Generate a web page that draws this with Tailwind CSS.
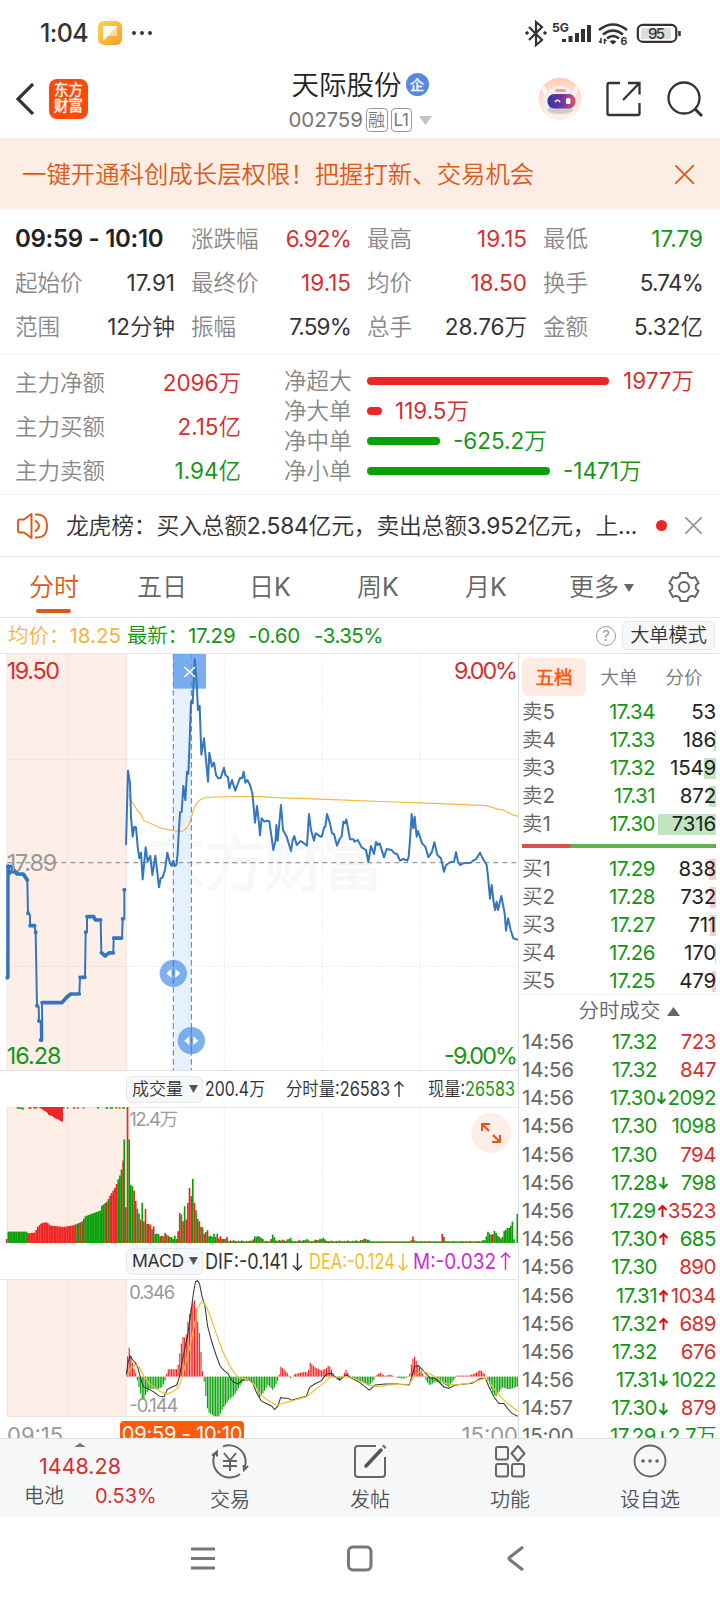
<!DOCTYPE html>
<html lang="zh-CN">
<head>
    <meta charset="UTF-8">
    <title>天际股份 002759</title>
    <meta name="viewport" content="width=device-width, initial-scale=1.0">
    <script src="https://cdn.jsdelivr.net/npm/@tailwindcss/browser@4"></script>
</head>
<body class="w-[720px] h-[1600px] overflow-hidden bg-white text-[#333] leading-none whitespace-nowrap font-['Inter','Noto_Sans_CJK_SC_DemiLight','Noto_Sans_CJK_SC',sans-serif]">
    <!-- Status bar -->
    <div class="h-[66px] pl-[40px] pr-[39px] flex items-center justify-between">
        <div class="flex items-center">
            <span class="w-[58px] text-[25px] font-medium tracking-tight">1:04</span>
            <svg class="w-6 h-6" viewBox="0 0 24 24">
                <defs><linearGradient id="note" x1="0" y1="0" x2="1" y2="1"><stop offset="0" stop-color="#f8d84c"/><stop offset="1" stop-color="#fb9a2c"/></linearGradient></defs>
                <rect width="24" height="24" rx="6" fill="url(#note)"/>
                <path d="M5 5h14v10l-9 0-5 5z" fill="#fff" opacity=".5"/><path d="M5 5h14L5 20z" fill="#fff"/>
            </svg>
            <svg class="w-[22px] h-2 ml-[9px]" viewBox="0 0 22 8" fill="#333"><circle cx="3" cy="4" r="2"/><circle cx="11" cy="4" r="2"/><circle cx="19" cy="4" r="2"/></svg>
        </div>
        <svg class="w-[157px] h-[28px]" viewBox="523 19 157 28" fill="none" stroke="#333" stroke-width="2.2">
            <path d="M528 27l13 13-6 5V22l6 5-13 13" stroke-width="2.200"/><circle cx="526" cy="33" r="1.3" fill="#333" stroke-width="1"/><circle cx="544" cy="33" r="1.3" fill="#333" stroke-width="1"/>
            <text x="551" y="32" font-size="12" font-weight="700" fill="#333" stroke="none" textLength="17" lengthAdjust="spacingAndGlyphs">5G</text>
            <path d="M563 42v-3M569.500 42v-6M576 42v-9M582 42v-13M588 42V25" stroke-width="4"/>
            <path d="M598 30q14-11 28 0M602 34.500q10-8 20 0M606 38.500q6-5 12 0" stroke-width="2.600"/><path d="M608.500 41.500l3.500 3 3.500-3q-3.500-2.500-7 0z" fill="#333" stroke="none"/>
            <path d="M600 38v5M603.500 39v5M598 41l2 2M603.500 39l2 2" stroke-width="1.500"/>
            <text x="619.500" y="45" font-size="10.500" font-weight="700" fill="#333" stroke="none">6</text>
            <rect x="636.800" y="24.800" width="38.500" height="17" rx="5"/><rect x="640" y="28" width="30" height="11" rx="1" fill="#ddd" stroke="none"/>
            <path d="M678.500 31v5" stroke-width="2.500"/>
            <text x="647" y="39" font-size="15" font-weight="500" fill="#333" stroke="none" textLength="17">95</text>
        </svg>
    </div>

    <!-- Title bar -->
    <header class="h-[73px] grid grid-cols-[1fr_auto_1fr] border-b border-[#e8e8e8]">
        <div class="flex items-center pl-4 pb-[7px]">
            <svg class="w-[18px] h-8" viewBox="0 0 18 32" fill="none" stroke="#333" stroke-width="3.200"><path d="M17 1L2 16l15 15"/></svg>
            <div class="ml-[15px] w-[39px] h-[40px] rounded-[8px] bg-[#fe4a05] text-white text-[14.500px] leading-[16.500px] font-black text-center pt-[3px]">东方<br>财富</div>
        </div>
        <div class="flex flex-col items-center">
            <div class="flex items-center mt-[4px] h-[32px]">
                <span class="text-[27.500px] text-[#222]">天际股份</span>
                <span class="ml-1 -mt-[3px] w-[23px] h-[23px] rounded-full bg-[#5b87e4] text-white text-[14px] font-bold flex items-center justify-center">企</span>
            </div>
            <div class="flex items-center h-[32px] mt-[2px] text-[#777]">
                <span class="text-[20.500px] w-[76px] tracking-[-0.1px]">002759</span>
                <span class="ml-px w-[22px] h-[24px] border border-[#999] rounded text-[17px] flex items-center justify-center">融</span>
                <span class="ml-[3px] w-[21px] h-[24px] border border-[#999] rounded text-[17px] tracking-tight flex items-center justify-center">L1</span>
                <svg class="ml-[7px] w-[13px] h-[9px]" viewBox="0 0 13 9"><path d="M0 0h13L6.500 9z" fill="#c4c4c4"/></svg>
            </div>
        </div>
        <div class="flex items-center justify-end pr-[17px] pb-[7px]">
            <svg class="w-[44px] h-[44px]" viewBox="0 0 44 44">
                <defs>
                    <linearGradient id="halo" x1="0" y1="0" x2="0" y2="1"><stop offset="0" stop-color="#ffcdb8"/><stop offset="1" stop-color="#fff4ef"/></linearGradient>
                    <linearGradient id="visor"><stop offset="0" stop-color="#3935a6"/><stop offset=".5" stop-color="#6b35a2"/><stop offset="1" stop-color="#e0526a"/></linearGradient>
                </defs>
                <circle cx="22" cy="22" r="21.500" fill="url(#halo)"/>
                <path d="M5 10l4 9M39 10l-4 9" stroke="#fff" stroke-width="4"/>
                <path d="M5 28c-1-8 5-19 17-19s18 10 17 19q-3 9-17 9T5 28z" fill="#f2eeee"/>
                <ellipse cx="22" cy="33" rx="13" ry="4" fill="#cfccd0"/>
                <rect x="17" y="12" width="11" height="3" rx="1.500" fill="#dfae78"/>
                <rect x="9.500" y="17" width="28" height="14.500" rx="6.500" fill="url(#visor)"/>
                <path d="M17 25q2.500-3.500 5 0" stroke="#fff" stroke-width="1.600" fill="none"/><rect x="28" y="21" width="4.500" height="6" rx="1.500" fill="#fff"/>
            </svg>
            <svg class="ml-[24px] w-[36px] h-[36px]" viewBox="0 0 36 36" fill="none" stroke="#333" stroke-width="2.300"><path d="M14 2H3q-1.500 0-1.500 1.500v29Q1.500 34 3 34h29q1.500 0 1.500-1.500V22M22 2h11.500v11.500M33 2.500L17 19"/></svg>
            <svg class="ml-[25px] w-[36px] h-[36px]" viewBox="0 0 36 36" fill="none" stroke="#333" stroke-width="2.300"><circle cx="17" cy="17" r="15.500"/><path d="M28 28l7 7" stroke-width="3"/></svg>
        </div>
    </header>

    <!-- Promo banner -->
    <div class="h-[70px] bg-[#fdede4] pl-[22px] pr-[26px] flex items-center justify-between text-[#dc5a16]">
        <span class="text-[24.400px]">一键开通科创成长层权限！把握打新、交易机会</span>
        <svg class="w-[19px] h-[19px]" viewBox="0 0 19 19" stroke="currentColor" stroke-width="1.700"><path d="M0 0l19 19M19 0L0 19"/></svg>
    </div>

    <!-- Range statistics, filled in below -->
    <div id="stats" class="h-[146px] pl-[15px] pr-[17px] pt-[8px] grid grid-cols-4 gap-x-4 auto-rows-[44px] items-center border-b border-[#f3f3f3]"></div>

    <!-- Money flow -->
    <div class="h-[140px] flex border-b border-[#f3f3f3] text-[22.500px] text-[#888]">
        <div class="w-[241px] pl-[15px] pt-[6px]">
            <div class="h-11 flex items-center justify-between"><span>主力净额</span><span class="text-[#d62f2f]">2096万</span></div>
            <div class="h-11 flex items-center justify-between"><span>主力买额</span><span class="text-[#d62f2f]">2.15亿</span></div>
            <div class="h-11 flex items-center justify-between"><span>主力卖额</span><span class="text-[#159515]">1.94亿</span></div>
        </div>
        <div class="pl-[43px] pt-[11px]">
            <div class="h-[30px] flex items-center"><span class="w-[83px]">净超大</span><i class="w-[242px] h-2 rounded-full bg-[#ef2424]"></i><span class="ml-[14px] text-[#d62f2f]">1977万</span></div>
            <div class="h-[30px] flex items-center"><span class="w-[83px]">净大单</span><i class="w-[15px] h-2 rounded-full bg-[#ef2424]"></i><span class="ml-[13px] text-[#d62f2f]">119.5万</span></div>
            <div class="h-[30px] flex items-center"><span class="w-[83px]">净中单</span><i class="w-[73px] h-2 rounded-full bg-[#08a008]"></i><span class="ml-[13px] text-[#159515]">-625.2万</span></div>
            <div class="h-[30px] flex items-center"><span class="w-[83px]">净小单</span><i class="w-[183px] h-2 rounded-full bg-[#08a008]"></i><span class="ml-[13px] text-[#159515]">-1471万</span></div>
        </div>
    </div>

    <!-- News ticker -->
    <div class="h-[62px] pl-[17px] pr-[17px] flex items-center border-b border-[#e5e5e5]">
        <svg class="w-[31px] h-[26px]" viewBox="0 0 31 26" fill="none" stroke="#dc5a16" stroke-width="1.900"><path d="M14.500 1L7 6.500H3q-2 0-2 2v9q0 2 2 2h4l7.500 5.500zM18 7.500q8 5.500 0 11M18 1.500q12-1 12 11.500T18 24.500"/></svg>
        <span class="ml-[18px] w-[574px] pt-[2px] text-[22.800px] tracking-[-0.2px]">龙虎榜：买入总额2.584亿元，卖出总额3.952亿元，上...</span>
        <i class="ml-4 w-[11px] h-[11px] rounded-full bg-[#ef2424]"></i>
        <svg class="ml-[18px] w-[17px] h-[17px]" viewBox="0 0 17 17" stroke="#999" stroke-width="1.900"><path d="M0 0l17 17M17 0L0 17"/></svg>
    </div>

    <!-- Period tabs -->
    <nav class="h-[61px] flex items-center border-b border-[#e5e5e5] text-[25px] text-[#666]">
        <div class="relative w-[108px] h-full flex items-center justify-center pt-px text-[#dc5a16]">分时<i class="absolute bottom-[4px] left-[36px] w-[35px] h-[4px] rounded-full bg-[#dc5a16]"></i></div>
        <div class="w-[108px] pt-px text-center">五日</div>
        <div class="w-[108px] pt-px text-center">日K</div>
        <div class="w-[108px] pt-px text-center">周K</div>
        <div class="w-[108px] pt-px text-center">月K</div>
        <div class="ml-[29px] pt-px flex items-center gap-[5px]">更多<svg class="w-[10px] h-[8px]" viewBox="0 0 10 8"><path d="M0 0h10L5 8z" fill="#666"/></svg></div>
        <svg class="ml-[34px] w-[32px] h-[32px]" viewBox="-16 -16 32 32" fill="none" stroke="#666" stroke-width="2"><path d="M-3.500-14h7l1 3.500 3 1.700 3.700-1 3.300 5.800-2.700 2.500v3l2.700 2.500-3.300 5.800-3.700-1-3 1.700-1 3.500h-7l-1-3.500-3-1.700-3.700 1-3.300-5.800 2.700-2.500v-3l-2.700-2.500 3.300-5.800 3.700 1 3-1.700z"/><circle r="5"/></svg>
    </nav>

    <!-- Latest quote line -->
    <div class="h-[36px] pl-[8px] pr-[5px] flex items-center border-b border-[#e5e5e5] text-[20.500px]">
        <span class="w-[119px] pt-px text-[#f2b544]">均价：18.25</span>
        <span class="w-[121px] pt-px text-[#159515] tracking-[-0.2px]">最新：17.29</span>
        <span class="w-[66px] pt-px text-[#159515] tracking-[-0.2px]">-0.60</span>
        <span class="pt-px text-[#159515] tracking-tight">-3.35%</span>
        <span class="ml-auto w-5 h-5 rounded-full border-[1.500px] border-[#999] text-[15px] text-[#999] flex items-center justify-center">?</span>
        <span class="ml-[6px] w-[93px] h-[29px] rounded-md border border-[#e6e8eb] bg-[#f6f7f9] text-[19.200px] flex items-center justify-center">大单模式</span>
    </div>

    <main class="h-[784px] flex overflow-hidden">
        <!-- Charts -->
        <section class="w-[519px] shrink-0 border-r border-[#e0e0e0]">
            <svg id="priceChart" class="block w-[518px] h-[416px]" viewBox="0 12 1554 1248" fill="none">
                <rect x="22" y="12" width="358" height="1248" fill="#fdeee8"/>
                <g stroke="#000" stroke-opacity=".07" stroke-width="3">
                    <path d="M203 12V1260M380 12V1260M673 12V1260M967 12V1260M1261 12V1260M22 328H1554M22 949H1554" stroke-dasharray="10 4"/>
                    <path d="M21 12V1260"/>
                </g>
                <text x="436" y="709" font-size="183" font-weight="900" fill="#f8f8f8" textLength="716">东方财富</text>
                <rect x="520" y="12" width="54" height="1248" fill="#e7f1fc"/>
                <path d="M22 638H1554" stroke="#999" stroke-width="3.500" stroke-dasharray="15 12"/>
                <path d="M520 12V1260M574 12V1260" stroke="#3f7fcc" stroke-width="3" stroke-dasharray="17 10"/>
                <rect x="519" y="12" width="99" height="104" fill="#5e9cea" fill-opacity=".82"/>
                <g fill="#5e9cea" fill-opacity=".8"><circle cx="520" cy="970" r="41"/><circle cx="574" cy="1172" r="41"/></g>
                <g stroke="#f4b73f" stroke-width="3.500">
                    <polyline points="386,437 392,447 398,460 404,468 412,482 420,488 432,512 460,524 480,534 520,542 545,545 560,535 568,522 576,495 584,470 596,452 612,444 640,441 720,440 780,440 830,443 980,448 1180,456 1300,460 1460,467 1495,478 1510,480 1537,494 1554,499"/>
                </g>
                <g stroke="#3475bd" stroke-width="6" stroke-linejoin="round">
                    <path d="M24 645V983" stroke-width="10"/>
                    <polyline points="22,983 24,645 30,672 38,655 45,660 50,672 68,674 76,684 82,695 84,790 90,795 90,827 103,828 107,847 111,1067 116,1070 117,1113 122,1114 123,1172 127,1172 126,1058 188,1058 192,1050 198,1040 212,1032 238,1031 240,982 255,982 257,847 261,845 261,800 280,800 285,810 302,808 304,908 315,918 328,906 340,908 341,862 345,866 366,866 368,807 373,807 373,718"/>
                    <path d="M24 650h14v16h12M50 672h20l12 18M90 827h14M126 1058h60l12-14 14-12h26M261 800h20l5 10h16M304 908l12 10 10-9h14M341 864h24M240 982h15" stroke-width="11" stroke-linecap="round"/>
                    <path d="M22 983h.1M84 790h.1M107 847h.1M111 1067h.1M117 1113h.1M122 1170h.1M257 847h.1M368 807h.1M373 719h.1" stroke-width="12" stroke-linecap="round"/>
                    <polyline points="378,585 384,362 390,400 393,500 398,560 403,530 408,532 413,590 418,625 423,608 428,688 437,592 443,635 451,618 457,675 466,617 477,712 482,685 488,682 495,660 502,608 510,640 515,648 520,632 524,648 529,645 533,610 536,550 540,487 545,486 550,408 556,450 561,365 565,372 568,300 573,155 578,160 584,28 590,100 594,180 599,168 604,314 612,265 618,330 624,395 628,308 636,350 642,338 648,375 655,385 662,384 672,353 676,375 684,382 688,415 696,390 702,410 706,422 712,405 720,384 726,385 731,365 736,398 742,390 750,405 757,430 761,470 765,518 771,468 776,510 780,556 785,505 793,515 800,512 808,514 820,600 827,570 829,525 833,572 843,465 849,540 860,560 873,603 878,570 883,558 890,585 902,573 912,580 921,587 927,492 933,540 942,572 947,550 962,560 966,558 972,533 976,530 981,492 990,520 996,550 1002,552 1011,587 1020,565 1025,560 1030,515 1035,520 1039,508 1050,568 1060,568 1064,575 1073,570 1085,592 1098,600 1105,635 1113,588 1122,612 1128,576 1133,585 1139,580 1152,622 1160,597 1175,600 1183,610 1191,612 1200,632 1210,627 1222,632 1226,620 1230,570 1235,492 1240,535 1244,500 1250,560 1254,543 1266,580 1276,590 1285,622 1296,605 1303,577 1312,615 1323,625 1332,665 1338,645 1352,636 1362,635 1368,607 1374,635 1380,645 1390,640 1412,638 1422,630 1428,628 1440,608 1448,625 1460,645 1464,680 1470,746 1475,705 1480,750 1485,780 1490,755 1494,780 1504,738 1514,790 1518,842 1524,805 1532,840 1540,865 1554,869"/>
                </g>
                <path d="M553 51l32 30M585 51l-32 30" stroke="#fff" stroke-width="5"/>
                <path d="M514 957v26l-15-13zM526 957v26l15-13zM568 1159v26l-15-13zM580 1159v26l15-13z" fill="#fff"/>
                <path d="M520 932v78M574 1134v78" stroke="#3f7fcc" stroke-width="3" stroke-dasharray="17 10"/>
                <g font-size="70">
                    <text x="20" y="88" fill="#d62f2f" textLength="160">19.50</text>
                    <text x="1554" y="88" fill="#d62f2f" text-anchor="end" textLength="192">9.00%</text>
                    <text x="20" y="662" fill="#999" textLength="152">17.89</text>
                    <text x="20" y="1241" fill="#159515" textLength="164">16.28</text>
                    <text x="1554" y="1241" fill="#159515" text-anchor="end" textLength="222">-9.00%</text>
                </g>
            </svg>

            <div class="h-[37px] border-t border-[#e0e0e0] pl-[126px] flex items-center text-[19px]">
                <span class="w-[77px] h-[27px] rounded-md border border-[#e6e8eb] bg-[#f6f7f9] pl-[5px] flex items-center text-[17px]">成交量<svg class="ml-[6px] w-[9px] h-[8px]" viewBox="0 0 9 8"><path d="M0 0h9L4.500 8z" fill="#555"/></svg></span>
                <svg class="w-[315px] h-[30px]" viewBox="203 0 315 30" font-size="19.500" fill="#333">
                    <text x="205" y="21.500" textLength="60" lengthAdjust="spacingAndGlyphs">200.4万</text>
                    <text x="286" y="21.500" textLength="104" lengthAdjust="spacingAndGlyphs">分时量:26583</text>
                    <path d="M399 23V8M394.500 12.500L399 8l4.500 4.500" fill="none" stroke="#333" stroke-width="1.400"/>
                    <text x="428" y="21.500" textLength="87" lengthAdjust="spacingAndGlyphs">现量:<tspan fill="#159515">26583</tspan></text>
                </svg>
            </div>

            <div class="relative h-[136px]">
                <svg class="block w-[518px] h-[136px]" viewBox="0 125 1547 407" preserveAspectRatio="none" fill="none">
                    <rect x="22" y="125" width="356" height="407" fill="#fdeee8"/>
                    <path d="M202 125V532M378 125V532M670 125V532M963 125V532M1255 125V532" stroke="#000" stroke-opacity=".07" stroke-width="3" stroke-dasharray="10 4"/>
                    <path d="M22 126H1547M22 532V125" stroke="#e5e5e5" stroke-width="3"/>
                    <path d="M115 125h73v45l-8-3-8-6-8-2-8-7-10-2-6-9-8-5-8-5z" fill="#ef2424"/>
                    <path d="M50 128h14M64 130h8M188 128h5M290 127h6M315 128h8M328 128h10M365 128h8" stroke="#08a008" stroke-width="5"/>
                    <path d="M85 128h9M100 127h12M200 128h4M218 128h6M230 128h5M247 128h5M345 127h5M355 128h5" stroke="#ef2424" stroke-width="5"/>
                    <g id="volumeBars"></g>
                    <text x="386" y="182" font-size="56" fill="#999" textLength="146">12.4万</text>
                </svg>
                <div class="absolute left-[471px] top-[6px] w-10 h-10 rounded-full bg-[#fdeee6] flex items-center justify-center">
                    <svg class="w-[20px] h-[20px]" viewBox="0 0 20 20" fill="none" stroke="#dc5a16" stroke-width="2.100"><path d="M1 8V1h8M1.500 1.500L8 8M19 12v7h-8M18.500 18.500L12 12"/></svg>
                </div>
            </div>

            <div class="h-[37px] pl-[126px] flex items-center border-b border-[#e5e5e5]">
                <span class="w-[77px] h-[27px] rounded-md border border-[#e6e8eb] bg-[#f6f7f9] pl-[5px] flex items-center text-[17.500px]"><span class="w-[52px] tracking-[-0.2px]">MACD</span><svg class="ml-[5px] w-[9px] h-[8px]" viewBox="0 0 9 8"><path d="M0 0h9L4.500 8z" fill="#555"/></svg></span>
                <svg class="w-[315px] h-[30px]" viewBox="203 0 315 30" font-size="21" fill="none" stroke-width="1.500">
                    <text x="205" y="22.500" fill="#333" textLength="83" lengthAdjust="spacingAndGlyphs">DIF:-0.141</text>
                    <path d="M297.500 7v17M293 19.500l4.500 4.500 4.500-4.500" stroke="#333"/>
                    <text x="309" y="22.500" fill="#f0c02c" textLength="86" lengthAdjust="spacingAndGlyphs">DEA:-0.124</text>
                    <path d="M403 7v17M398.500 19.500L403 24l4.500-4.500" stroke="#f0c02c"/>
                    <text x="413" y="22.500" fill="#cf2ad0" textLength="83" lengthAdjust="spacingAndGlyphs">M:-0.032</text>
                    <path d="M505.500 24V7M501 11.500l4.500-4.500 4.500 4.500" stroke="#cf2ad0"/>
                </svg>
            </div>

            <svg class="block w-[518px] h-[137px]" viewBox="0 643 1547 407" preserveAspectRatio="none" fill="none">
                <rect x="22" y="643" width="356" height="407" fill="#fdeee8"/>
                <path d="M202 643V1050M378 643V1050M670 643V1050M963 643V1050M1255 643V1050" stroke="#000" stroke-opacity=".07" stroke-width="3" stroke-dasharray="10 4"/>
                <path d="M22 1049H1547M22 1050V643" stroke="#e0e0e0" stroke-width="3"/>
                <g id="macdBars"></g>
                <g font-size="55" fill="#999"><text x="386" y="700" textLength="137">0.346</text><text x="386" y="1035" textLength="147">-0.144</text></g>
                <polyline stroke="#333" stroke-width="3" points="377,925 382,890 388,868 396,880 404,888 412,905 420,935 428,960 440,965 450,970 460,976 468,982 476,988 490,990 500,968 515,960 528,955 536,930 545,880 560,810 570,740 578,680 584,648 590,645 596,655 604,695 612,720 620,780 632,825 645,865 658,900 670,912 680,920 695,945 710,952 725,940 745,940 755,950 765,975 780,1002 800,1012 812,1018 820,1028 830,1018 838,992 850,994 860,994 870,1000 890,995 915,988 925,962 940,952 960,942 975,922 990,920 1000,930 1015,940 1035,925 1050,935 1075,948 1103,970 1120,955 1150,952 1185,952 1222,955 1230,930 1238,900 1250,898 1262,910 1285,935 1300,935 1325,960 1340,965 1360,955 1410,950 1435,935 1450,935 1460,960 1475,990 1490,1010 1505,1010 1520,1030 1530,1040 1547,1048"/>
                <polyline stroke="#f0c02c" stroke-width="3.500" points="377,930 390,905 402,895 415,900 430,930 445,950 465,965 480,975 498,982 515,975 530,965 540,945 552,900 565,850 578,790 590,730 598,712 606,708 615,720 630,755 645,800 665,855 690,905 710,932 740,938 760,955 780,985 800,1000 825,1015 850,1008 880,1000 915,990 940,970 965,950 985,932 1005,932 1035,930 1070,940 1100,955 1130,960 1160,955 1222,952 1240,925 1260,912 1290,925 1330,950 1360,955 1400,950 1450,935 1465,950 1485,980 1510,1005 1547,1034"/>
            </svg>

            <!-- Time axis, cut off by the bottom bar -->
            <div class="h-[30px] pt-[4px] flex items-start text-[22px] text-[#999]">
                <span class="w-[120px] pl-[7px] pt-[3px]">09:15</span>
                <span class="w-[124px] h-[28px] rounded bg-[#ff5a0a] text-white text-center pt-[3px] text-[20px] tracking-[-0.2px]">09:59 - 10:10</span>
                <span class="ml-auto pt-[3px]">15:00</span>
            </div>
        </section>

        <!-- Order book and trades -->
        <aside class="w-[201px] shrink-0 pl-[3px]">
            <div class="mt-[4px] h-[38px] flex items-center text-[18.500px] text-[#777]">
                <span class="w-16 h-full rounded-md bg-[#feebe1] text-[#ff5a0a] font-bold flex items-center justify-center">五档</span>
                <span class="w-[66px] text-center">大单</span>
                <span class="w-[64px] text-center">分价</span>
            </div>
            <div id="asks" class="pt-[2px]"></div>
            <div class="mt-[6px] mb-[6px] w-[194px] h-[4px] bg-[linear-gradient(115deg,#d9504c_0_44px,#62b350_45px)]"></div>
            <div id="bids" class="pt-[1px] h-[141px] -ml-[3px] pl-[3px] border-b border-[#eee]"></div>
            <div class="h-[33px] pl-[16px] flex items-center justify-center gap-[6px] text-[20.500px] text-[#666]">分时成交<svg class="w-[13px] h-[9px]" viewBox="0 0 13 9"><path d="M0 9h13L6.500 0z" fill="#666"/></svg></div>
            <div id="ticks"></div>
        </aside>
    </main>

    <!-- Bottom bar -->
    <footer class="h-[79px] flex bg-[#f6f7f9] border-t border-[#e0e2e5] text-[20px] text-[#555]">
        <div class="w-[160px] flex flex-col items-center pt-[4px]">
            <svg class="w-3 h-1" viewBox="0 0 12 4"><path d="M0 4h12L6 0z" fill="#777"/></svg>
            <span class="mt-[9px] text-[21.500px] text-[#d62f2f]">1448.28</span>
            <span class="mt-[8px] flex gap-[31px] pl-[20px] self-start w-full"><span class="ml-[4px]">电池</span><span class="text-[#d62f2f]">0.53%</span></span>
        </div>
        <div class="w-[140px] flex flex-col items-center pt-[4px]">
            <svg class="w-[38px] h-[36px]" viewBox="0 0 38 36" fill="none" stroke="#666" stroke-width="2"><path d="M5 9a16.500 16.500 0 0 0 24 22M12 3.500A16.500 16.500 0 0 1 33.500 25M1 12.500l5-4v5M37 23l-4 4-.5-5M13 10l6 7.500 6-7.500M12 18h14M12 23h14M19 17v11" /></svg>
            <span class="mt-[11px]">交易</span>
        </div>
        <div class="w-[140px] flex flex-col items-center pt-[4px]">
            <svg class="w-[34px] h-[36px]" viewBox="0 0 34 36" fill="none" stroke="#666" stroke-width="2"><path d="M23 3H5Q2 3 2 6v25q0 3 3 3h24q3 0 3-3V14"/><path d="M13 23L28 7" stroke-width="3.500" stroke="#555" stroke-linecap="round"/><path d="M30.500 4.500l1.500-1.500" stroke-width="4"/></svg>
            <span class="mt-[11px]">发帖</span>
        </div>
        <div class="w-[140px] flex flex-col items-center pt-[4px]">
            <svg class="w-[32px] h-[36px]" viewBox="0 0 32 36" fill="none" stroke="#666" stroke-width="2"><rect x="2" y="4" width="12" height="12.500" rx="2"/><rect x="2" y="21" width="12" height="12.500" rx="2"/><rect x="18" y="21" width="12" height="12.500" rx="2"/><path d="M24 3l6.500 7.500L24 18l-6.500-7.500z" stroke-linejoin="round"/></svg>
            <span class="mt-[11px]">功能</span>
        </div>
        <div class="w-[140px] flex flex-col items-center pt-[4px]">
            <svg class="w-[34px] h-[36px]" viewBox="0 0 34 36" fill="none" stroke="#666" stroke-width="1.800"><circle cx="17" cy="18" r="15.500"/><path d="M10 18h.1M17 18h.1M24 18h.1" stroke-width="3.500" stroke-linecap="round"/></svg>
            <span class="mt-[11px]">设自选</span>
        </div>
    </footer>

    <!-- System navigation -->
    <svg class="block w-[720px] h-[83px]" viewBox="0 1517 720 83" fill="none" stroke="#777" stroke-width="3">
        <path d="M191 1549h24M191 1558.500h24M191 1568h24"/>
        <rect x="348.500" y="1547" width="22.500" height="23" rx="4.500"/>
        <path d="M523 1547l-13.500 10.500q-1 1 0 2L523 1570"/>
    </svg>

    <script>
        const RED = '#ef2424', GREEN = '#08a008';

        const stats = [
            ['', '', ''], ['涨跌幅', '6.92%', 'r'], ['最高', '19.15', 'r'], ['最低', '17.79', 'g'],
            ['起始价', '17.91', ''], ['最终价', '19.15', 'r'], ['均价', '18.50', 'r'], ['换手', '5.74%', ''],
            ['范围', '12分钟', ''], ['振幅', '7.59%', ''], ['总手', '28.76万', ''], ['金额', '5.32亿', '']
        ];
        const tone = { r: 'text-[#d62f2f]', g: 'text-[#159515]', '': 'text-[#333]' };
        document.getElementById('stats').innerHTML = stats.map(([label, value, t]) => label
            ? `<div class="flex items-center justify-between text-[22.500px]"><span class="text-[#888]">${label}</span><span class="${tone[t]} ${value.endsWith('%') ? 'tracking-[-0.8px]' : 'tracking-normal'}">${value}</span></div>`
            : `<div class="text-[24px] font-semibold text-[#222] tracking-[-0.3px]">09:59 - 10:10</div>`
        ).join('');

        // Order book: label, price, volume, depth bar width
        const asks = [['卖5', '17.34', 53, 0], ['卖4', '17.33', 186, 2], ['卖3', '17.32', 1549, 12], ['卖2', '17.31', 872, 7], ['卖1', '17.30', 7316, 58]];
        const bids = [['买1', '17.29', 838, 7], ['买2', '17.28', 732, 6], ['买3', '17.27', 711, 6], ['买4', '17.26', 170, 1], ['买5', '17.25', 479, 4]];
        function bookRow([label, price, volume, depth], bar) {
            return `<div class="relative w-[194px] h-[28px] flex items-center text-[20.500px]">
                <i class="absolute right-0 top-[4px] h-[21px] ${bar}" style="width:${depth}px"></i>
                <span class="relative w-[60px] text-[#666]">${label}</span>
                <span class="relative w-[73px] text-right text-[#159515] tracking-tight">${price}</span>
                <span class="relative flex-1 text-right text-[#222] tracking-[-0.2px]">${volume}</span>
            </div>`;
        }
        document.getElementById('asks').innerHTML = asks.map(r => bookRow(r, 'bg-[#bfe6c0]')).join('');
        document.getElementById('bids').innerHTML = bids.map(r => bookRow(r, 'bg-[#f9cccc]')).join('');

        // Trades: time, price, direction, volume, colour
        const ticks = [
            ['14:56', '17.32', '', '723', 'r'], ['14:56', '17.32', '', '847', 'r'], ['14:56', '17.30', 'd', '2092', 'g'],
            ['14:56', '17.30', '', '1098', 'g'], ['14:56', '17.30', '', '794', 'r'], ['14:56', '17.28', 'd', '798', 'g'],
            ['14:56', '17.29', 'u', '3523', 'r'], ['14:56', '17.30', 'u', '685', 'g'], ['14:56', '17.30', '', '890', 'r'],
            ['14:56', '17.31', 'u', '1034', 'r'], ['14:56', '17.32', 'u', '689', 'r'], ['14:56', '17.32', '', '676', 'r'],
            ['14:56', '17.31', 'd', '1022', 'g'], ['14:57', '17.30', 'd', '879', 'r'], ['15:00', '17.29', 'd', '2.7万', 'g']
        ];
        const arrows = {
            '': '',
            u: '<path d="M5.500 13V2M1.500 6l4-4 4 4" stroke="#d90f0f"/>',
            d: '<path d="M5.500 1v11M1.500 8l4 4 4-4" stroke="#159515"/>'
        };
        document.getElementById('ticks').innerHTML = ticks.map(([time, price, dir, volume, t]) => `
            <div class="w-[194px] h-[28.200px] flex items-center text-[20.500px]">
                <span class="w-[60px] text-[#666] tracking-[-0.2px]">${time}</span>
                <span class="w-[75px] text-right text-[#159515] tracking-tight">${price}</span>
                <svg class="w-[11px] h-[14px] ml-px shrink-0" viewBox="0 0 11 14" fill="none" stroke-width="2">${arrows[dir]}</svg>
                <span class="flex-1 flex justify-end ${tone[t]} tracking-tight">${volume}</span>
            </div>`).join('');

        function lerp(points, x) {
            for (let i = 1; i < points.length; i++) {
                const [x0, y0] = points[i - 1], [x1, y1] = points[i];
                if (x <= x1) return y0 + (y1 - y0) * (x - x0) / (x1 - x0);
            }
            return points[points.length - 1][1];
        }

        // Volume: call auction first, then one bar per minute
        const auction = [[22, 34], [82, 34], [84, 29], [106, 31], [110, 45], [125, 60], [140, 62], [150, 52], [190, 48], [220, 53], [245, 64], [255, 80], [300, 97], [303, 110], [320, 124], [330, 144], [345, 167], [355, 195], [362, 210], [366, 247]];
        let bars = '';
        const bar = (x, h, color, w = 5) => `<rect x="${x - w / 2}" y="${532 - h}" width="${w}" height="${h}" fill="${color}"/>`;
        for (let x = 25, i = 0; x < 368; x += 4.9, i++) {
            let color = i % 2 ? GREEN : RED;
            if (x < 82 || (x > 252 && x < 300) || (x > 305 && x < 318) || (x > 352 && x < 362)) color = GREEN;
            else if ((x > 108 && x < 225) || (x > 332 && x < 350) || x < 100) color = RED;
            bars += bar(x, lerp(auction, x), color, 5.4);
        }
        bars += bar(20, 12, RED) + bar(371, 310, GREEN) + bar(376, 107, RED);
        const minutes = '407r 310g 174g 170g 157r 126r 103g 88g 70r 120g 65r 102r 57g 57r 55r 42g 50r 27g 28g 27g 20r 22g 20r 30r 25g 22r 18g 18g 12g 22g 12g 35r 90r 85g 65r 110g 70r 120r 165r 140r 192g 120r 98g 72g 65r 48r 47g 28r 33g 38r 20g 22g 18g 28g 18r 28g 14r 20r 12g 12r 12g 18r'.split(' ');
        const quiet = [[680, 9], [750, 7], [762, 22], [780, 20], [790, 6], [808, 8], [815, 30], [822, 10], [855, 10], [867, 17], [875, 6], [918, 12], [930, 7], [965, 16], [980, 7], [1070, 8], [1095, 15], [1110, 5], [1225, 5], [1233, 20], [1240, 6], [1317, 5], [1322, 35], [1330, 6], [1430, 6], [1450, 12], [1458, 38], [1468, 24], [1478, 38], [1490, 20], [1500, 14], [1507, 42], [1518, 47], [1525, 50], [1531, 68], [1536, 5], [1542, 0]];
        for (let i = 0; i < 240; i++) {
            const x = 381 + 4.87 * i;
            if (i < minutes.length) {
                bars += bar(x, parseInt(minutes[i]), minutes[i].endsWith('r') ? RED : GREEN);
            } else if (x < 1540) {
                const h = lerp(quiet, x);
                bars += bar(x, Math.max(5, h - (i * 7 % 5)), (i * i + i * 3) % 7 < 3 && h < 30 ? RED : GREEN);
            }
        }
        bars += bar(1545, 87, GREEN);
        document.getElementById('volumeBars').innerHTML = bars;

        // MACD histogram around the zero line
        const macd = [[381, 60], [386, 87], [391, 60], [396, 40], [401, 20], [406, 10], [411, -15], [420, -50], [428, -75], [436, -50], [450, -35], [470, -38], [485, -30], [494, -10], [498, 10], [503, 22], [530, 22], [537, 70], [545, 118], [555, 115], [562, 170], [570, 200], [578, 228], [583, 225], [590, 165], [596, 125], [602, 50], [606, 5], [611, -20], [618, -90], [625, -108], [640, -118], [655, -118], [665, -95], [685, -68], [700, -55], [715, -30], [730, -8], [745, -10], [760, -22], [775, -62], [785, -50], [800, -25], [815, -40], [825, -22], [832, -5], [838, 30], [850, 20], [860, 8], [868, -5], [880, 8], [910, 14], [920, 12], [926, 42], [940, 28], [960, 18], [975, 25], [982, 35], [990, 20], [1000, -2], [1015, -14], [1025, 5], [1034, 20], [1042, 5], [1050, -6], [1080, -14], [1100, -28], [1115, -12], [1125, 5], [1135, 12], [1150, 2], [1165, 6], [1190, -4], [1205, -6], [1222, 0], [1230, 45], [1237, 62], [1250, 30], [1262, 10], [1270, -8], [1283, -26], [1300, -15], [1320, -18], [1340, -32], [1355, -10], [1365, 3], [1400, 3], [1420, 10], [1435, 20], [1450, 5], [1458, -12], [1470, -45], [1480, -60], [1500, -32], [1520, -38], [1545, -30]];
        let hist = '';
        for (let i = 0; i < 240; i++) {
            const x = 381 + 4.87 * i, h = lerp(macd, x);
            hist += `<rect x="${x - 1.7}" y="${h > 0 ? 930 - h : 930}" width="3.4" height="${Math.abs(h)}" fill="${h > 0 ? RED : GREEN}"/>`;
        }
        document.getElementById('macdBars').innerHTML = hist;
    </script>
</body>
</html>
